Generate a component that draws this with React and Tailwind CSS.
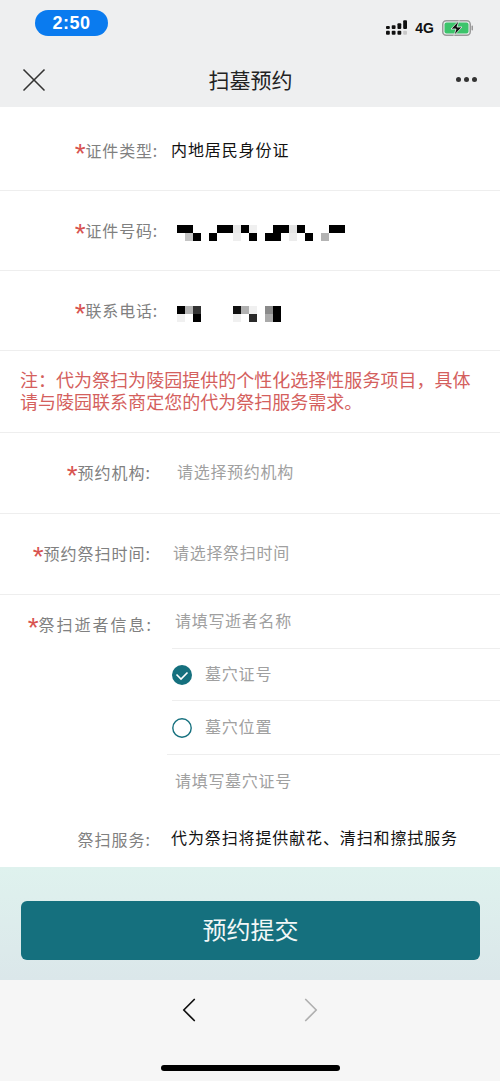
import { ChevronLeft, ChevronRight, X } from "lucide-react";

const cjk = "font-['Noto_Sans_CJK_SC','Noto_Sans',sans-serif]";

// mosaic blocks: [col, row, colour]
const idBlocks = [
  [0, 0, "#000"], [1, 0, "#000"], [1, 1, "#c4c4c4"], [2, 1, "#000"], [4, 1, "#000"],
  [5, 0, "#000"], [6, 0, "#000"], [7, 0, "#e8e8e8"], [7, 1, "#eeeeee"], [8, 0, "#000"],
  [9, 0, "#f0f0f0"], [9, 1, "#000"], [11, 1, "#000"], [12, 0, "#000"], [12, 1, "#000"],
  [13, 0, "#000"], [14, 0, "#e4e4e4"], [14, 1, "#ececec"], [15, 0, "#000"], [16, 1, "#000"],
  [18, 1, "#b4b4b4"], [19, 0, "#000"], [20, 0, "#000"],
];

const phoneBlocks = [
  [0, 0, "#000"], [1, 0, "#b4b4b4"], [2, 0, "#333"], [0, 1, "#f0f0f0"], [2, 1, "#000"],
  [7, 0, "#111"], [8, 0, "#b0b0b0"], [9, 0, "#f0f0f0"], [7, 1, "#f0f0f0"], [9, 1, "#2a2a2a"],
  [11, 0, "#8a8a8a"], [11, 1, "#aaa"], [12, 0, "#000"], [12, 1, "#000"],
];

function Mosaic({ blocks, cols }) {
  return (
    <svg width={cols * 8} height="16" viewBox={`0 0 ${cols * 8} 16`}>
      {blocks.map(([c, r, fill]) => (
        <rect key={`${c}-${r}`} x={c * 8} y={r * 8} width="8" height="8" fill={fill} />
      ))}
    </svg>
  );
}

function Label({ text, required = true, className }) {
  return (
    <div className={`shrink-0 text-right text-[16px] leading-[24px] text-[#808080] whitespace-nowrap ${className}`}>
      {required && (
        <span className="font-['Liberation_Sans',sans-serif] text-[28px] leading-[20px] align-[-6px] tracking-normal text-[#d8534f]">*</span>
      )}
      {text}
    </div>
  );
}

function SignalIcon() {
  return (
    <svg width="21" height="16" viewBox="0 0 22 16" fill="#111">
      <rect x="0" y="6" width="4" height="3" rx="1" />
      <rect x="0" y="11" width="4" height="4" rx="1" />
      <rect x="6" y="5" width="4" height="4" rx="1" />
      <rect x="6" y="11" width="4" height="4" rx="1" />
      <rect x="12" y="3" width="4" height="6" rx="1" />
      <rect x="12" y="11" width="4" height="4" rx="1" />
      <rect x="18" y="0" width="4" height="9" rx="1" />
      <rect x="18" y="11" width="4" height="4" rx="1" fill="#c8c8c8" />
    </svg>
  );
}

function BatteryIcon() {
  return (
    <svg width="32" height="16" viewBox="0 0 32 16">
      <rect x="0.75" y="0.75" width="27.5" height="14.5" rx="3.5" fill="none" stroke="#9a9a9a" strokeWidth="1.5" />
      <rect x="2.5" y="2.5" width="24" height="11" rx="2" fill="#3cc46b" />
      <rect x="29.5" y="5.5" width="1.5" height="5" rx="0.75" fill="#9a9a9a" />
      <path d="M17 0.5 9 9h5l-2 6.5L20 7h-5z" fill="#111" stroke="#eeeff0" strokeWidth="0.8" />
    </svg>
  );
}

export default function App() {
  return (
    <div className={`flex h-[1081px] w-[500px] flex-col overflow-hidden bg-white ${cjk}`}>
      {/* top bars */}
      <div className="h-[107px] shrink-0 bg-[#eeeff0]">
        <div className="flex h-[54px] items-start justify-between pl-[35px] pr-[26px] pt-[10px]">
          <div className="flex h-[26px] w-[73px] items-center justify-center rounded-full bg-[#0a7bef] font-['Liberation_Sans',sans-serif] text-[18px] font-bold tracking-[0.5px] text-white">
            2:50
          </div>
          <div className="mt-[10px] flex items-center gap-[8px]">
            <SignalIcon />
            <span className="font-['Liberation_Sans',sans-serif] text-[14px] font-bold leading-[16px] text-[#111]">4G</span>
            <BatteryIcon />
          </div>
        </div>
        <div className="flex h-[53px] items-center justify-between pl-[14px] pr-[23px]">
          <X size={40} strokeWidth={1} className="mb-[2px] text-[#333]" />
          <div className="pb-[4px] pr-[9px] text-[21px] leading-[28px] text-[#222]">扫墓预约</div>
          <div className="mb-[2px] flex gap-[3px]">
            <span className="h-[5px] w-[5px] rounded-full bg-[#333]" />
            <span className="h-[5px] w-[5px] rounded-full bg-[#333]" />
            <span className="h-[5px] w-[5px] rounded-full bg-[#333]" />
          </div>
        </div>
      </div>

      {/* form */}
      <div className="flex h-[84px] shrink-0 items-center border-b border-[#eeeeee] pt-[2px]">
        <Label text="证件类型:" className="w-[158px] pt-[2px] tracking-[0.8px]" />
        <div className="ml-[13px] pb-[2px] text-[16px] tracking-[0.9px] text-[#111]">内地居民身份证</div>
      </div>
      <div className="flex h-[80px] shrink-0 items-center border-b border-[#eeeeee]">
        <Label text="证件号码:" className="w-[158px] tracking-[0.8px]" />
        <div className="ml-[19px] mt-[5px] flex">
          <Mosaic blocks={idBlocks} cols={21} />
        </div>
      </div>
      <div className="flex h-[80px] shrink-0 items-center border-b border-[#eeeeee]">
        <Label text="联系电话:" className="w-[158px] tracking-[0.8px]" />
        <div className="ml-[19px] mt-[6px] flex">
          <Mosaic blocks={phoneBlocks} cols={13} />
        </div>
      </div>
      <div className="flex h-[82px] shrink-0 items-center border-b border-[#eeeeee] pl-[20px] pr-[21px]">
        <p className="pb-[4px] text-[18px] leading-[22px] tracking-[0.02px] text-[#d4605d]">
          注：代为祭扫为陵园提供的个性化选择性服务项目，具体请与陵园联系商定您的代为祭扫服务需求。
        </p>
      </div>
      <div className="flex h-[81px] shrink-0 items-center border-b border-[#eeeeee]">
        <Label text="预约机构:" className="w-[151px] tracking-[1px]" />
        <div className="ml-[26px] pb-[4px] text-[16px] tracking-[0.7px] text-[#a0a0a0]">请选择预约机构</div>
      </div>
      <div className="flex h-[81px] shrink-0 items-center border-b border-[#eeeeee]">
        <Label text="预约祭扫时间:" className="w-[151px] tracking-[1px]" />
        <div className="ml-[22px] pb-[4px] text-[16px] tracking-[0.7px] text-[#a0a0a0]">请选择祭扫时间</div>
      </div>

      {/* deceased info */}
      <div className="flex shrink-0">
        <Label text="祭扫逝者信息:" className="mt-[17px] w-[153px] tracking-[2px]" />
        <div className="min-w-0 flex-1">
          <div className="ml-[19px] flex h-[54px] items-center border-b border-[#eeeeee] pb-[3px] pl-[3px] text-[16px] tracking-[0.7px] text-[#a0a0a0]">
            请填写逝者名称
          </div>
          <div className="ml-[19px] flex h-[52px] items-center gap-[13px] border-b border-[#eeeeee] pt-[1px]">
            <svg width="20" height="20" viewBox="0 0 20 20">
              <circle cx="10" cy="10" r="10" fill="#15707e" />
              <path d="M4.5 9.5 9 14l6.5-6.5" fill="none" stroke="#fff" strokeWidth="1.6" />
            </svg>
            <span className="pb-[4px] text-[16px] tracking-[0.8px] text-[#a0a0a0]">墓穴证号</span>
          </div>
          <div className="ml-[14px] flex h-[54px] items-center gap-[13px] border-b border-[#eeeeee] pl-[5px]">
            <svg width="20" height="20" viewBox="0 0 20 20">
              <circle cx="10" cy="10" r="9.2" fill="none" stroke="#15707e" strokeWidth="1.4" />
            </svg>
            <span className="pb-[4px] text-[16px] tracking-[0.8px] text-[#a0a0a0]">墓穴位置</span>
          </div>
          <div className="ml-[22px] flex h-[55px] items-center pb-[5px] text-[16px] tracking-[0.7px] text-[#a0a0a0]">
            请填写墓穴证号
          </div>
        </div>
      </div>
      <div className="flex h-[57px] shrink-0 items-center">
        <Label text="祭扫服务:" required={false} className="w-[151px] tracking-[1px]" />
        <div className="ml-[20px] pb-[4px] whitespace-nowrap text-[16px] tracking-[0.88px] text-[#111]">代为祭扫将提供献花、清扫和擦拭服务</div>
      </div>

      {/* submit */}
      <div className="flex h-[113px] shrink-0 items-start bg-gradient-to-b from-[#dff2ee] to-[#dbe7ea] pl-[21px] pr-[20px] pt-[34px]">
        <button className="flex h-[59px] w-full items-center justify-center rounded-[6px] bg-[#15707e] pb-[4px] text-[24px] text-[#f2f7f7]">
          预约提交
        </button>
      </div>

      {/* browser bar */}
      <div className="flex min-h-0 flex-1 flex-col items-center bg-[#f6f6f6]">
        <div className="mt-[9px] flex w-[164px] justify-between">
          <ChevronLeft size={42} strokeWidth={1} className="text-[#111]" />
          <ChevronRight size={42} strokeWidth={1} className="text-[#b0b0b0]" />
        </div>
        <div className="mt-[34px] h-[6px] w-[179px] rounded-full bg-black" />
      </div>
    </div>
  );
}
